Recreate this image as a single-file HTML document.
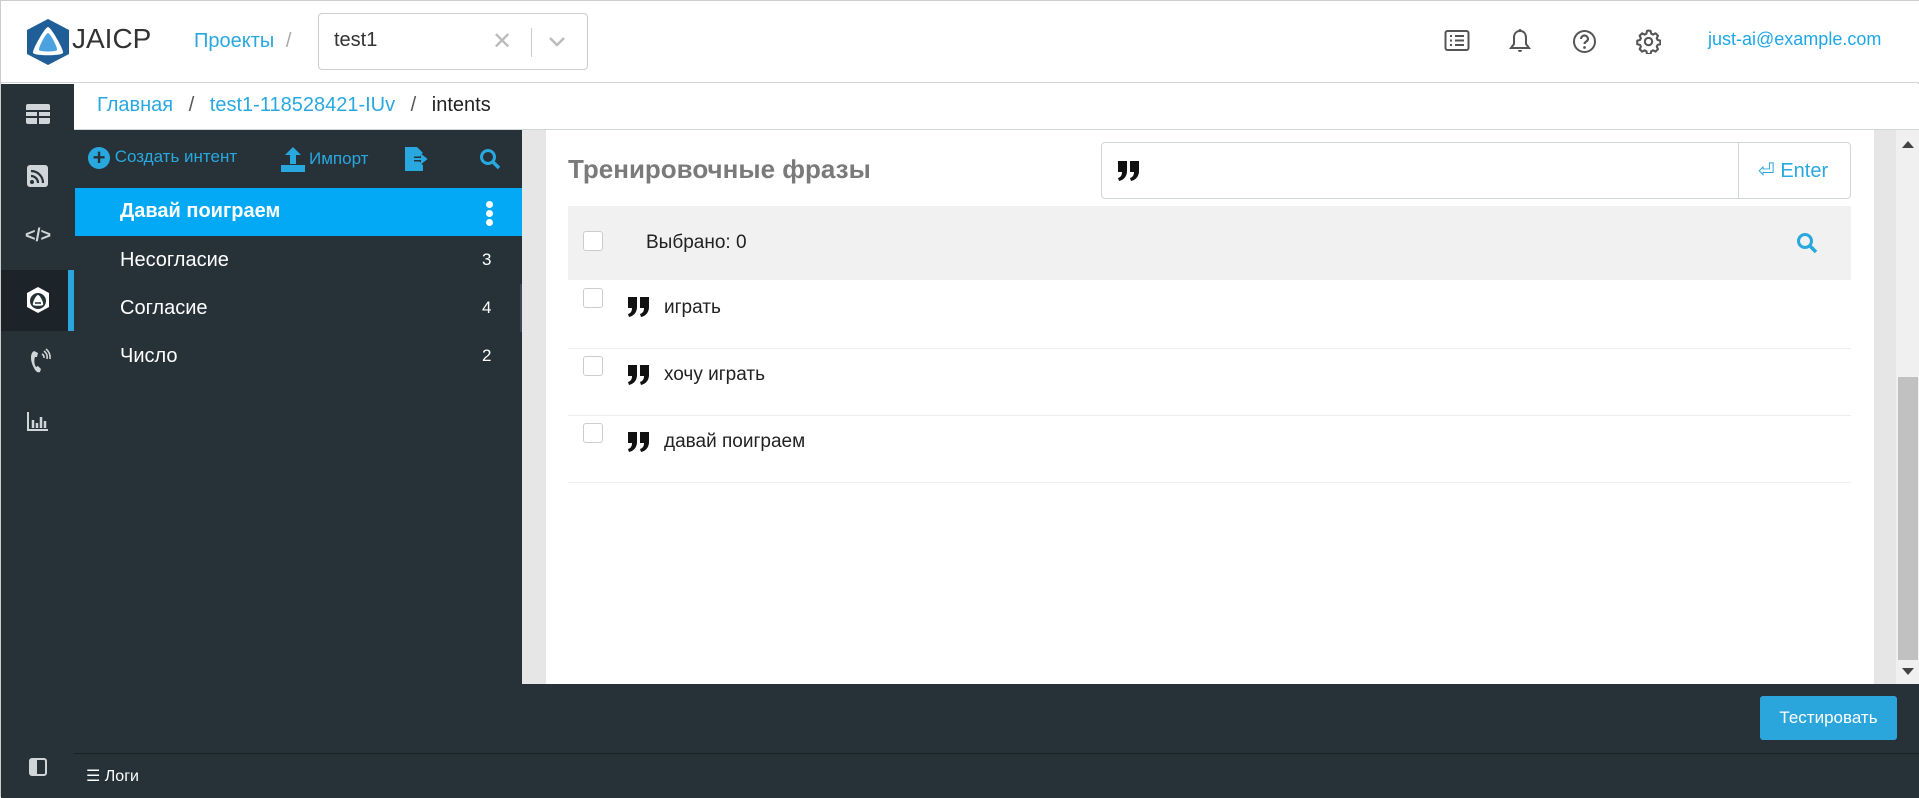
<!DOCTYPE html>
<html><head><meta charset="utf-8"><style>
*{box-sizing:border-box;margin:0;padding:0}
body{width:1919px;height:797px;overflow:hidden;position:relative;font-family:"Liberation Sans",sans-serif;background:#fff;border:1px solid #ccc}
.a{position:absolute}
.dark{background:#263238}
.t{white-space:nowrap}
.cb{position:absolute;width:20px;height:20px;border:1px solid #ccc;border-radius:3px;background:#fff}
</style></head><body>
<svg width="0" height="0" style="position:absolute"><defs><g id="q"><path d="M1 2h9v10c0 5-3 9-8 10l-1-3c3-1 4-3 4-6h-4z M13 2h9v10c0 5-3 9-8 10l-1-3c3-1 4-3 4-6h-4z" fill="#111"/></g></defs></svg>
<!-- header -->
<div class="a" style="left:0;top:0;width:1919px;height:82px;border-bottom:1px solid #d0d5d8;background:#fff"></div>
<svg class="a" style="left:24px;top:17px" width="46" height="48" viewBox="0 0 46 48"><polygon points="23,1 44,12 44,36 23,47 2,36 2,12" fill="#1f5e96"/><path d="M23 9C26 9 39 32 38 35 36 38 10 38 8 35 7 32 20 9 23 9z" fill="#fff"/><path d="M23 15C25 15 33 30 32 32 31 34 15 34 14 32 13 30 21 15 23 15z" fill="#4aa3e0"/></svg>
<div class="a t" style="left:71px;top:22px;font-size:28px;color:#333">JAICP</div>
<div class="a t" style="left:193px;top:29px;font-size:20px;color:#29a8e0">Проекты <span style="color:#aaa;margin-left:6px">/</span></div>
<div class="a" style="left:317px;top:12px;width:270px;height:57px;border:1px solid #ccc;border-radius:4px"></div>
<div class="a t" style="left:333px;top:28px;font-size:20px;color:#333">test1</div>
<div class="a t" style="left:491px;top:26px;font-size:24px;color:#bbb">✕</div>
<div class="a" style="left:530px;top:27px;width:1px;height:29px;background:#ccc"></div>
<svg class="a" style="left:547px;top:35px" width="18" height="12"><path d="M2 2l7 7 7-7" stroke="#bbb" stroke-width="2.5" fill="none"/></svg>
<svg class="a" style="left:1443px;top:28px" width="26" height="24" viewBox="0 0 26 24"><rect x="1.5" y="2" width="23" height="19" rx="2" fill="none" stroke="#555" stroke-width="2"/><path d="M6 7h2M11 7h9M6 11.5h2M11 11.5h9M6 16h2M11 16h9" stroke="#555" stroke-width="2"/></svg>
<svg class="a" style="left:1508px;top:27px" width="22" height="26" viewBox="0 0 22 26"><path d="M11 3c-4 0-6 3-6 7v6l-3 4h18l-3-4v-6c0-4-2-7-6-7z" fill="none" stroke="#555" stroke-width="2"/><path d="M9 22a2 2 0 004 0" fill="#555"/><circle cx="11" cy="2.5" r="1.5" fill="#555"/></svg>
<svg class="a" style="left:1571px;top:28px" width="25" height="25" viewBox="0 0 25 25"><circle cx="12.5" cy="12.5" r="10.5" fill="none" stroke="#555" stroke-width="2"/><path d="M9 10a3.5 3.5 0 117 0c0 2.5-3.5 2.5-3.5 5" fill="none" stroke="#555" stroke-width="2.2"/><circle cx="12.5" cy="18.5" r="1.4" fill="#555"/></svg>
<svg class="a" style="left:1635px;top:28px" width="25" height="25" viewBox="0 0 24 24"><path d="M12 1.5l2 .3.6 2.6 1.7.9 2.4-1.2 2.4 2.4-1.2 2.4.9 1.7 2.6.6v3.4l-2.6.6-.9 1.7 1.2 2.4-2.4 2.4-2.4-1.2-1.7.9-.6 2.6h-3.4l-.6-2.6-1.7-.9-2.4 1.2-2.4-2.4 1.2-2.4-.9-1.7-2.6-.6v-3.4l2.6-.6.9-1.7-1.2-2.4 2.4-2.4 2.4 1.2 1.7-.9.6-2.6z" fill="none" stroke="#555" stroke-width="2" stroke-linejoin="round"/><circle cx="12" cy="12" r="3.5" fill="none" stroke="#555" stroke-width="2"/></svg>
<div class="a t" style="left:1707px;top:28px;font-size:18px;color:#1ea7e8">just-ai@example.com</div>
<!-- rail -->
<div class="a dark" style="left:0;top:83px;width:73px;height:714px"></div>
<div class="a" style="left:0;top:269px;width:73px;height:61px;background:#1c2429"></div>
<div class="a" style="left:67px;top:269px;width:6px;height:61px;background:#2ba6dc"></div>
<svg class="a" style="left:24px;top:102px" width="26" height="22"><rect x="1" y="1" width="24" height="20" rx="2" fill="#cfd5d8"/><path d="M1 8h24M13 8v13M1 14h24" stroke="#263238" stroke-width="2"/></svg>
<svg class="a" style="left:26px;top:163px" width="22" height="24"><rect x="0" y="1" width="21" height="22" rx="3" fill="#cfd5d8"/><circle cx="5" cy="18" r="2" fill="#263238"/><path d="M4 12a7 7 0 017 7M4 7a12 12 0 0112 12" stroke="#263238" stroke-width="2.2" fill="none"/></svg>
<div class="a t" style="left:24px;top:224px;font-size:18px;font-weight:bold;color:#cfd5d8">&lt;/&gt;</div>
<svg class="a" style="left:24px;top:285px" width="26" height="28" viewBox="0 0 26 28"><polygon points="13,1 24,7 24,21 13,27 2,21 2,7" fill="#fff"/><circle cx="13" cy="15" r="8" fill="#263238"/><path d="M13 9C15 9 19 17 18 19 17 20 9 20 8 19 7 17 11 9 13 9z" fill="#fff"/><circle cx="11" cy="17" r="1" fill="#263238"/><circle cx="13" cy="17" r="1" fill="#263238"/><circle cx="15" cy="17" r="1" fill="#263238"/></svg>
<svg class="a" style="left:27px;top:347px" width="24" height="26"><path d="M6 3c-4 2-4 10 0 17 2 4 4 5 6 4l1-3-3-3-2 1c-2-3-2-7-1-10l2 0 1-4z" fill="#cfd5d8"/><path d="M14 6a4 4 0 012 4M16 3a8 8 0 013 8M18 1a11 11 0 014 10" stroke="#cfd5d8" stroke-width="1.6" fill="none"/></svg>
<svg class="a" style="left:26px;top:410px" width="22" height="20"><path d="M1 1v18h20" stroke="#cfd5d8" stroke-width="2" fill="none"/><path d="M6 9v8M10 12v5M14 6v11M18 10v7" stroke="#cfd5d8" stroke-width="2.5"/></svg>
<svg class="a" style="left:28px;top:757px" width="18" height="18"><rect x="1" y="1" width="16" height="16" rx="2" fill="none" stroke="#cfd5d8" stroke-width="2"/><rect x="1" y="1" width="7" height="16" fill="#cfd5d8"/></svg>
<!-- bottom bar -->
<div class="a dark" style="left:73px;top:752px;width:1846px;height:45px;border-top:1px solid #1a2226"></div>
<div class="a t" style="left:85px;top:765px;font-size:16px;color:#fff">☰ Логи</div>
<!-- breadcrumb -->
<div class="a" style="left:73px;top:83px;width:1846px;height:46px;border-bottom:1px solid #d0d5d8;background:#fff"></div>
<div class="a t" style="left:96px;top:93px;font-size:20px;color:#29a8e0">Главная <span style="color:#555;margin:0 10px">/</span> test1-118528421-IUv <span style="color:#555;margin:0 10px">/</span> <span style="color:#222">intents</span></div>
<!-- intent panel -->
<div class="a dark" style="left:73px;top:129px;width:448px;height:623px"></div>
<div class="a t" style="left:87px;top:146px;font-size:17px;color:#29a8e0"><span style="display:inline-block;width:22px;height:22px;border-radius:50%;background:#29a8e0;color:#263238;font-weight:bold;text-align:center;line-height:22px;font-size:22px;vertical-align:-3px">+</span> Создать интент</div>
<svg class="a" style="left:280px;top:145px" width="24" height="26"><path d="M12 1l8 8h-5v9h-6v-9h-5z" fill="#29a8e0"/><rect x="0" y="19" width="24" height="7" fill="#29a8e0"/></svg>
<div class="a t" style="left:308px;top:148px;font-size:17px;color:#29a8e0">Импорт</div>
<svg class="a" style="left:403px;top:145px" width="26" height="26"><path d="M1 1h12l6 6v18h-18z" fill="#29a8e0"/><path d="M10 13h11M17 9l5 4-5 4" stroke="#263238" stroke-width="5" fill="none"/><path d="M10 13h11M17 9l5 4-5 4" stroke="#29a8e0" stroke-width="2" fill="#29a8e0"/></svg>
<svg class="a" style="left:478px;top:147px" width="22" height="22"><circle cx="9" cy="9" r="6.5" fill="none" stroke="#29a8e0" stroke-width="3"/><path d="M14 14l6 6" stroke="#29a8e0" stroke-width="3.5"/></svg>
<div class="a" style="left:74px;top:187px;width:447px;height:48px;background:#03a9f4"></div>
<div class="a t" style="left:119px;top:199px;font-size:20px;font-weight:bold;color:#fff">Давай поиграем</div>
<div class="a" style="left:485px;top:200px;width:7px;height:7px;border-radius:50%;background:#fff;box-shadow:0 9px 0 #fff,0 18px 0 #fff"></div>
<div class="a t" style="left:119px;top:248px;font-size:20px;color:#fff">Несогласие</div><div class="a t" style="left:481px;top:249px;font-size:17px;color:#fff">3</div>
<div class="a t" style="left:119px;top:296px;font-size:20px;color:#fff">Согласие</div><div class="a t" style="left:481px;top:297px;font-size:17px;color:#fff">4</div>
<div class="a t" style="left:119px;top:344px;font-size:20px;color:#fff">Число</div><div class="a t" style="left:481px;top:345px;font-size:17px;color:#fff">2</div>
<div class="a" style="left:519px;top:283px;width:2px;height:48px;background:#3d4a52"></div>
<!-- main -->
<div class="a" style="left:521px;top:129px;width:24px;height:554px;background:#e6e6e6"></div>
<div class="a" style="left:1873px;top:129px;width:22px;height:554px;background:#e6e6e6"></div>
<div class="a" style="left:1895px;top:129px;width:24px;height:554px;background:#f0f0f0"></div>
<div class="a" style="left:1897px;top:376px;width:20px;height:283px;background:#c1c1c1"></div>
<div class="a" style="left:1901px;top:140px;border:6px solid transparent;border-bottom:7px solid #444;border-top:0"></div>
<div class="a" style="left:1901px;top:667px;border:6px solid transparent;border-top:7px solid #444;border-bottom:0"></div>
<div class="a dark" style="left:521px;top:683px;width:1398px;height:69px"></div>
<div class="a t" style="left:1759px;top:695px;width:137px;height:44px;background:#2ba6dc;border-radius:3px;color:#fff;font-size:17px;text-align:center;line-height:44px">Тестировать</div>
<div class="a t" style="left:567px;top:153px;font-size:26px;font-weight:bold;color:#7a7a7a">Тренировочные фразы</div>
<div class="a" style="left:1100px;top:141px;width:750px;height:57px;border:1px solid #d0d5d8;border-radius:4px"></div>
<div class="a" style="left:1737px;top:141px;width:1px;height:57px;background:#d0d5d8"></div>
<svg class="a" style="left:1116px;top:158px" width="23" height="23"><use href="#q"/></svg>
<div class="a t" style="left:1757px;top:157px;font-size:20px;color:#29a8e0">⏎ Enter</div>
<div class="a" style="left:567px;top:205px;width:1283px;height:74px;background:#f1f1f1"></div>
<div class="cb" style="left:582px;top:230px"></div>
<div class="a t" style="left:645px;top:231px;font-size:19px;color:#222">Выбрано: 0</div>
<svg class="a" style="left:1795px;top:231px" width="22" height="22"><circle cx="9" cy="9" r="6.5" fill="none" stroke="#29a8e0" stroke-width="3"/><path d="M14 14l6 6" stroke="#29a8e0" stroke-width="3.5"/></svg>
<div class="cb" style="left:582px;top:287px"></div><svg class="a" style="left:626px;top:294px" width="23" height="23"><use href="#q"/></svg><div class="a t" style="left:663px;top:296px;font-size:19px;color:#222">играть</div>
<div class="a" style="left:567px;top:347px;width:1283px;height:1px;background:#eee"></div>
<div class="cb" style="left:582px;top:355px"></div><svg class="a" style="left:626px;top:362px" width="23" height="23"><use href="#q"/></svg><div class="a t" style="left:663px;top:363px;font-size:19px;color:#222">хочу играть</div>
<div class="a" style="left:567px;top:414px;width:1283px;height:1px;background:#eee"></div>
<div class="cb" style="left:582px;top:422px"></div><svg class="a" style="left:626px;top:429px" width="23" height="23"><use href="#q"/></svg><div class="a t" style="left:663px;top:430px;font-size:19px;color:#222">давай поиграем</div>
<div class="a" style="left:567px;top:481px;width:1283px;height:1px;background:#eee"></div>
</body></html>
